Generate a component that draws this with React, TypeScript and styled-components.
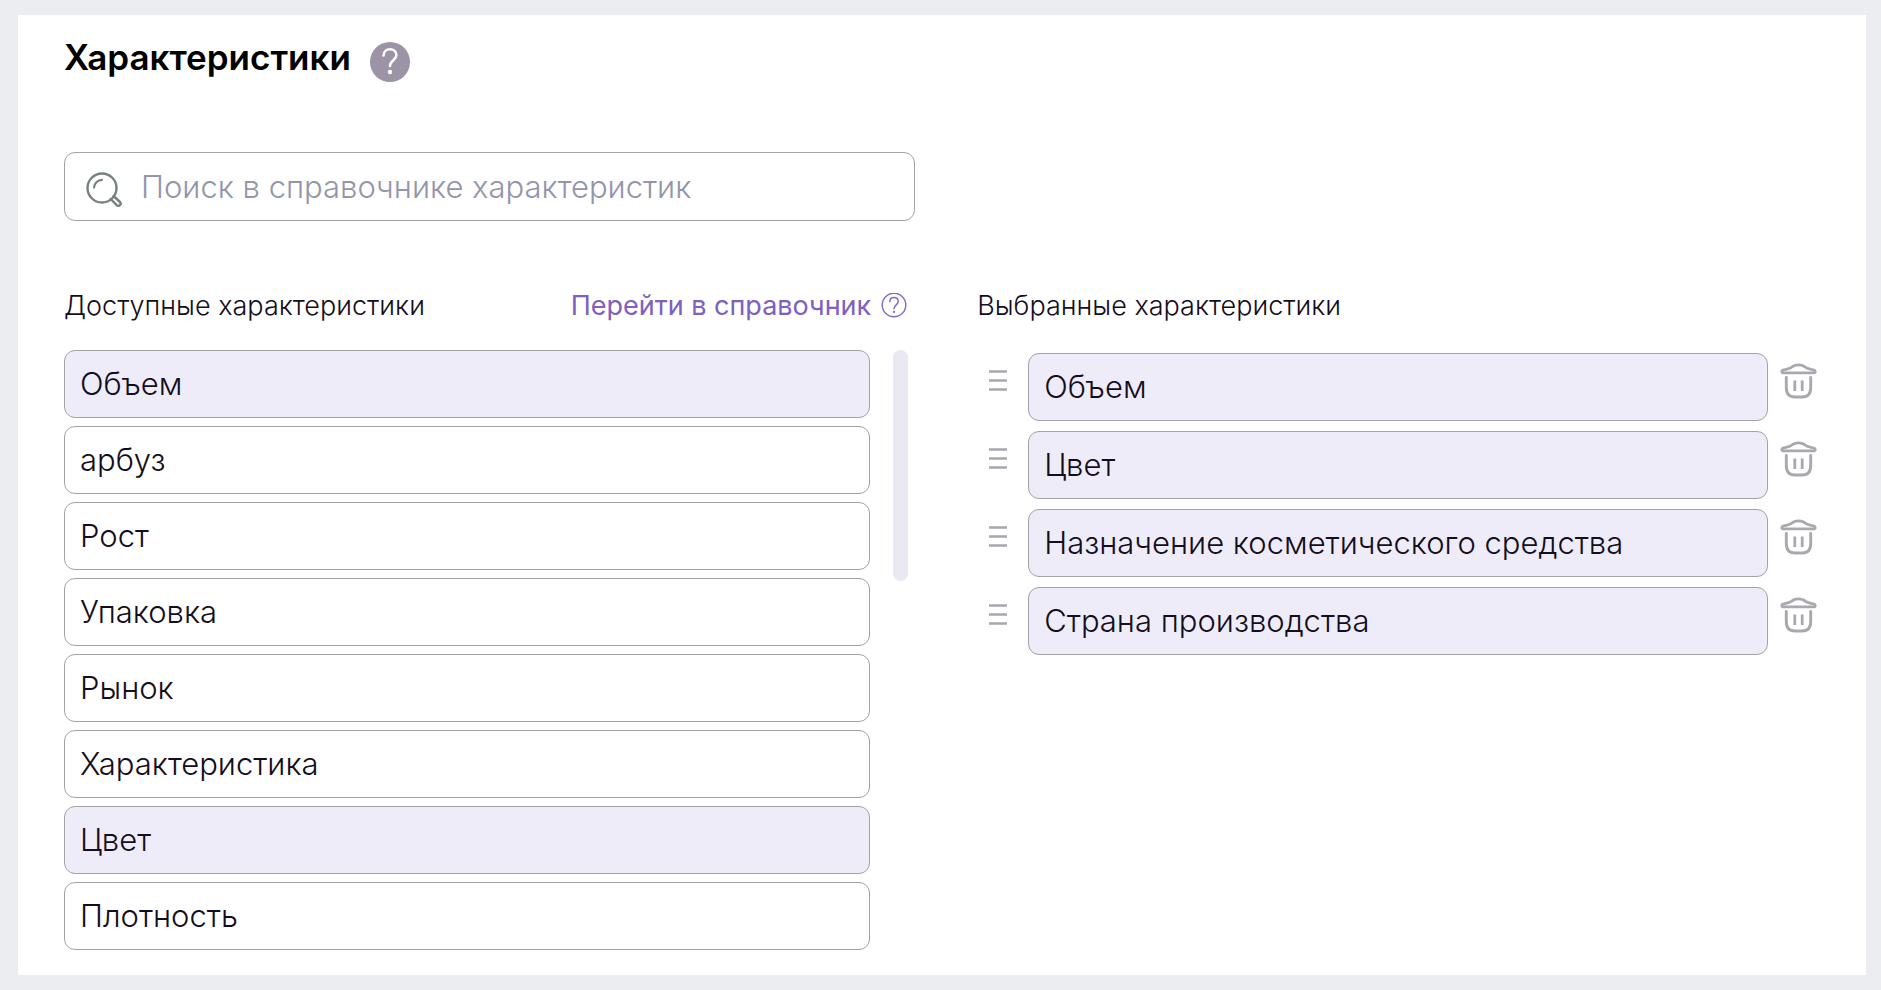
import React from "react";
import styled, { createGlobalStyle } from "styled-components";

const GlobalStyle = createGlobalStyle`
  *, *::before, *::after { box-sizing: border-box; }
  body {
    margin: 0;
    background: #ecedf1;
    color: #140d20;
    font-family: Inter, "Liberation Sans", sans-serif;
  }
`;

const Card = styled.main`
  margin: 15px 15px 15px 18px;
  padding: 24px 46px 25px;
  background: #fff;
`;

const Header = styled.header`
  display: flex;
  align-items: center;
  gap: 19px;
  height: 46px;
`;

const Title = styled.h1`
  margin: 0;
  padding-bottom: 10px;
  color: #000;
  font-size: 35px;
  line-height: 44px;
  font-weight: 600;
`;

const IconButton = styled.button`
  display: flex;
  flex: none;
  padding: 0;
  border: 0;
  background: none;
  cursor: pointer;
`;

const Columns = styled.div`
  display: grid;
  grid-template-columns: 101fr 100fr;
  column-gap: 62px;
`;

const SearchRow = styled(Columns)`
  margin-top: 67px;
`;

const SearchBox = styled.label`
  display: flex;
  align-items: center;
  height: 69px;
  padding: 0 21px;
  gap: 18px;
  border: 1px solid #a3a2a6;
  border-radius: 11px;
`;

const SearchInput = styled.input`
  flex: 1;
  min-width: 0;
  padding: 0;
  border: 0;
  outline: 0;
  background: none;
  color: inherit;
  font: 300 31px/40px Inter, "Liberation Sans", sans-serif;

  &::placeholder {
    color: #9395ab;
    opacity: 1;
  }
`;

const Lists = styled(Columns)`
  margin-top: 65px;
`;

const ColumnHead = styled.div`
  display: flex;
  align-items: center;
  justify-content: space-between;
  height: 40px;
  padding-right: 8px;
`;

const ColumnTitle = styled.h2`
  margin: 0;
  font-size: 27px;
  line-height: 40px;
  font-weight: 300;
`;

const DirectoryLink = styled.a`
  display: flex;
  align-items: center;
  gap: 10px;
  color: #7d60c0;
  font-size: 27px;
  line-height: 40px;
  font-weight: 400;
  text-decoration: none;
`;

const Scroller = styled.div`
  display: flex;
  justify-content: space-between;
  gap: 23px;
  margin-top: 24px;
  padding-right: 7px;
`;

const ScrollThumb = styled.div`
  flex: none;
  width: 15px;
  height: 231px;
  border-radius: 8px;
  background: #eae8f2;
`;

const List = styled.ul<{ $gap: number }>`
  display: flex;
  flex: 1;
  flex-direction: column;
  gap: ${(p) => p.$gap}px;
  margin: 0;
  padding: 0;
  list-style: none;
`;

const SelectedList = styled(List)`
  margin-top: 27px;
`;

const SelectedRow = styled.li`
  display: flex;
  align-items: flex-start;
`;

const Item = styled.button<{ $active?: boolean }>`
  display: block;
  flex: 1;
  width: 100%;
  height: 68px;
  padding: 0 15px;
  border: 1px solid #a3a2a6;
  border-radius: 11px;
  background: ${(p) => (p.$active ? "#eeecf9" : "#fff")};
  color: inherit;
  font: 300 31px/40px Inter, "Liberation Sans", sans-serif;
  text-align: left;
  cursor: pointer;
`;

const Handle = styled(IconButton)`
  padding: 17px 21px 0 12px;
  cursor: grab;
`;

const Remove = styled(IconButton)`
  padding: 9px 3px 0 12px;
`;

const available = [
  { name: "Объем", active: true },
  { name: "арбуз" },
  { name: "Рост" },
  { name: "Упаковка" },
  { name: "Рынок" },
  { name: "Характеристика" },
  { name: "Цвет", active: true },
  { name: "Плотность" },
];

const selected = ["Объем", "Цвет", "Назначение косметического средства", "Страна производства"];

const HelpBadge = () => (
  <svg width="40" height="40" viewBox="0 0 40 40" fill="none" aria-hidden="true">
    <circle cx="20" cy="20" r="20" fill="#9c94a6" />
    <path d="M13.500 13.500C13.700 9.800 16.300 7.300 20 7.300s6.400 2.400 6.400 5.800c0 5-6.400 5.400-6.400 10.900" stroke="#fff" strokeWidth="2.600" strokeLinecap="round" />
    <circle cx="20" cy="30" r="2.200" fill="#fff" />
  </svg>
);

const HelpOutline = () => (
  <svg width="26" height="26" viewBox="0 0 26 26" fill="none" stroke="#8468c4" aria-hidden="true">
    <circle cx="13" cy="12" r="11.800" strokeWidth="1.400" />
    <path d="M8.800 8.700C8.900 6.200 10.600 4.600 13 4.600s4.200 1.600 4.200 3.900c0 3.300-4.200 3.500-4.200 7.200" strokeWidth="1.500" strokeLinecap="round" />
    <circle cx="13" cy="18.900" r="1.100" fill="#8468c4" stroke="none" />
  </svg>
);

const SearchIcon = () => (
  <svg width="37" height="40" viewBox="0 0 37 40" fill="none" stroke="#78817f" strokeLinecap="round" strokeLinejoin="round" aria-hidden="true">
    <circle cx="16" cy="21" r="14.500" strokeWidth="2.400" />
    <path d="M8 20.500C8.300 16.400 11.500 13 16 12.800" strokeWidth="2.200" />
    <path d="M27.500 29L34 35C36 37 33 40 31 38.300L24.700 32" strokeWidth="2.400" />
  </svg>
);

const DragIcon = () => (
  <svg width="18" height="22" viewBox="0 0 18 22" stroke="#a9a7ae" strokeWidth="2.600" aria-hidden="true">
    <path d="M0 1.500H18M0 10.500H18M0 19.500H18" />
  </svg>
);

const TrashIcon = () => (
  <svg width="37" height="37" viewBox="0 0 37 37" fill="none" stroke="#aba7ae" strokeLinecap="round" strokeLinejoin="round" aria-hidden="true">
    <path d="M3 10.800C1.400 10.800 1.400 8.400 3 8C6 7 9.500 7.300 12 5C14.500 2.200 22.500 2.200 25 5C27.500 7.300 31 7 34 8C35.600 8.400 35.600 10.800 34 10.800Z" strokeWidth="2.800" />
    <path d="M6.300 15.500V25.500C6.300 31.800 9.500 35 15 35H22C27.500 35 30.700 31.800 30.700 25.500V15.500" strokeWidth="2.900" />
    <path d="M14.800 18.500V29M22.200 18.500V29" strokeWidth="2.800" strokeLinecap="butt" />
  </svg>
);

export default function App() {
  return (
    <>
      <GlobalStyle />
      <Card>
        <Header>
          <Title>Характеристики</Title>
          <IconButton type="button" aria-label="Справка">
            <HelpBadge />
          </IconButton>
        </Header>

        <SearchRow>
          <SearchBox>
            <SearchIcon />
            <SearchInput
              type="text"
              aria-label="Поиск в справочнике характеристик"
              placeholder="Поиск в справочнике характеристик"
            />
          </SearchBox>
        </SearchRow>

        <Lists>
          <section>
            <ColumnHead>
              <ColumnTitle>Доступные характеристики</ColumnTitle>
              <DirectoryLink href="#directory">
                Перейти в справочник
                <HelpOutline />
              </DirectoryLink>
            </ColumnHead>
            <Scroller>
              <List $gap={8}>
                {available.map((item) => (
                  <li key={item.name}>
                    <Item type="button" $active={item.active} aria-pressed={!!item.active}>
                      {item.name}
                    </Item>
                  </li>
                ))}
              </List>
              <ScrollThumb />
            </Scroller>
          </section>

          <section>
            <ColumnHead>
              <ColumnTitle>Выбранные характеристики</ColumnTitle>
            </ColumnHead>
            <SelectedList $gap={10}>
              {selected.map((name) => (
                <SelectedRow key={name}>
                  <Handle type="button" aria-label={`Переместить: ${name}`}>
                    <DragIcon />
                  </Handle>
                  <Item type="button" $active>
                    {name}
                  </Item>
                  <Remove type="button" aria-label={`Удалить: ${name}`}>
                    <TrashIcon />
                  </Remove>
                </SelectedRow>
              ))}
            </SelectedList>
          </section>
        </Lists>
      </Card>
    </>
  );
}
